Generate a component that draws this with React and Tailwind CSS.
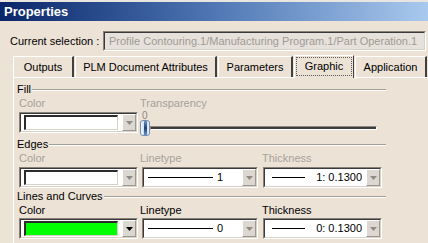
import React from 'react';

// Classic CATIA "Properties" dialog, Graphic tab
const DISABLED = 'text-[#a7a29b]';

function Arrow({ dark }) {
  return (
    <svg width="7" height="4" viewBox="0 0 7 4">
      <path d="M0 0h7L3.5 4z" fill={dark ? '#000' : '#8e8a84'} />
    </svg>
  );
}

function DropButton({ dark }) {
  return (
    <div className="w-[14px] h-[17px] shrink-0 flex items-center justify-center bg-[#dcd8d1] border border-t-white border-l-white border-r-[#9c988f] border-b-[#9c988f]">
      <Arrow dark={dark} />
    </div>
  );
}

function Combo({ children, dark, width }) {
  return (
    <div className={`h-[21px] ${width} border border-t-[#86827a] border-l-[#86827a] border-r-white border-b-white`}>
      <div className="h-full flex items-center bg-white border border-t-[#3a3a3a] border-l-[#3a3a3a] border-r-[#d6d2ca] border-b-[#d6d2ca]">
        <div className="flex-1 flex items-center min-w-0 h-full">{children}</div>
        <DropButton dark={dark} />
      </div>
    </div>
  );
}

function Swatch({ color }) {
  return (
    <div
      className={`ml-[3px] w-[94px] h-[15px] border-t-2 border-l-2 border-r border-b border-t-[#2b2b2b] border-l-[#2b2b2b] border-r-[#d6d2ca] border-b-[#d6d2ca] ${color}`}
    />
  );
}

function GroupHeader({ title, className = '' }) {
  return (
    <div className={`h-[13px] ml-[3px] w-[369px] flex items-center ${className}`}>
      <span className="leading-none">{title}</span>
      <div className="flex-1 ml-[1px] h-[2px] border-t border-t-[#a29e96] border-b border-b-white" />
    </div>
  );
}

function Labels({ disabled, className = '' }) {
  const c = disabled ? DISABLED : 'text-black';
  return (
    <div className={`h-[13px] flex items-center pl-[5px] leading-none ${c} ${className}`}>
      <span className="w-[121px]">Color</span>
      <span className="w-[122px]">Linetype</span>
      <span>Thickness</span>
    </div>
  );
}

function LineRow({ value, thick, dark, className = '' }) {
  return (
    <div className={`h-[21px] flex pl-[5px] ${className}`}>
      <Combo width="w-[119px]" dark={dark}>
        <Swatch color={dark ? 'bg-[#00ff00]' : 'bg-white'} />
      </Combo>
      <div className="ml-[4px]">
        <Combo width="w-[116px]">
          <div className="ml-[4px] w-[65px] h-px bg-black" />
          <span className="ml-[4px]">{value}</span>
        </Combo>
      </div>
      <div className="ml-[5px]">
        <Combo width="w-[119px]">
          <div className="ml-[7px] w-[33px] h-px bg-black" />
          <span className="flex-1 text-right pr-[4px]">{thick}</span>
        </Combo>
      </div>
    </div>
  );
}

function Tab({ label, width, selected }) {
  if (selected) {
    return (
      <div className={`${width} h-[23px] -mb-px relative z-10 bg-[#ece2d6] border-t border-l border-t-white border-l-white border-r border-r-[#404040] p-[1px] pb-[2px]`}>
        <div className="h-full flex items-center justify-center border border-dotted border-[#5a5a5a]">
          {label}
        </div>
      </div>
    );
  }
  return (
    <div className={`${width} h-[21px] flex items-center justify-center border-t border-l border-t-white border-l-white border-r-2 border-r-[#404040]`}>
      {label}
    </div>
  );
}

export default function App() {
  return (
    <div className="w-[428px] h-[243px] overflow-hidden bg-[#ece2d6] font-['Liberation_Sans',Arial,sans-serif] text-[11px] text-black">
      <div className="h-[2px] bg-[#e9e6e1]" />
      <div className="h-[19px] flex items-center pl-[4px] bg-gradient-to-r from-[#0a2569] via-[#5077b4] to-[#a9c9ee] text-white font-bold text-[13px]">
        Properties
      </div>

      {/* current selection */}
      <div className="mt-[10px] h-[20px] flex items-center pl-[10px]">
        <span className="w-[93px]">Current selection :</span>
        <div className="w-[323px] h-full border border-t-[#86827a] border-l-[#86827a] border-r-white border-b-white">
          <div className="h-full flex items-center pl-[4px] bg-[#e6e1da] border border-t-[#3a3a3a] border-l-[#3a3a3a] border-r-[#d6d2ca] border-b-[#d6d2ca] text-[#9f9b95] whitespace-nowrap overflow-hidden">
            Profile Contouring.1/Manufacturing Program.1/Part Operation.1
          </div>
        </div>
      </div>

      {/* tabs */}
      <div className="mt-[3px] h-[23px] flex items-end pl-[13px]">
        <Tab label="Outputs" width="w-[61px]" />
        <div className="w-[1px]" />
        <Tab label="PLM Document Attributes" width="w-[142px]" />
        <div className="w-[1px]" />
        <Tab label="Parameters" width="w-[75px]" />
        <div className="w-[1px]" />
        <Tab label="Graphic" width="w-[60px]" selected />
        <div className="w-[1px]" />
        <Tab label="Application" width="w-[72px]" />
      </div>

      {/* panel */}
      <div className="ml-[13px] h-[170px] border-t border-l border-white">
        <GroupHeader title="Fill" className="mt-[5px]" />
        <div className={`mt-[1px] h-[13px] flex items-center pl-[5px] leading-none ${DISABLED}`}>
          <span className="w-[121px]">Color</span>
          <span>Transparency</span>
        </div>
        <div className="mt-[2px] h-[21px] flex pl-[5px]">
          <Combo width="w-[119px]">
            <Swatch color="bg-white" />
          </Combo>
          <div className="ml-[2px] w-[238px] h-[21px] flex flex-col">
            <span className="h-[8px] pl-[2px] text-[10px] leading-[8px] text-[#8e8a84]">0</span>
            <div className="flex items-center">
              <div className="w-[10px] h-[16px] rounded-[3px] border border-[#6f8fb5] bg-gradient-to-r from-[#f4f8fc] via-[#c6d8ec] to-[#e6eef8] flex justify-center">
                <div className="w-[3px] h-full bg-gradient-to-b from-[#6f92c2] via-[#1f3f72] to-[#6f92c2]" />
              </div>
              <div className="w-[227px] h-[4px] border border-t-[#8c8880] border-l-[#8c8880] border-r-white border-b-white bg-[#3c3c3c]" />
            </div>
          </div>
        </div>

        <GroupHeader title="Edges" className="mt-[5px]" />
        <Labels disabled className="mt-[1px]" />
        <LineRow value="1" thick="1: 0.1300" className="mt-[2px]" />

        <GroupHeader title="Lines and Curves" className="mt-[2px]" />
        <Labels className="mt-[1px]" />
        <LineRow value="0" thick="0: 0.1300" dark className="mt-[1px]" />
      </div>
    </div>
  );
}
